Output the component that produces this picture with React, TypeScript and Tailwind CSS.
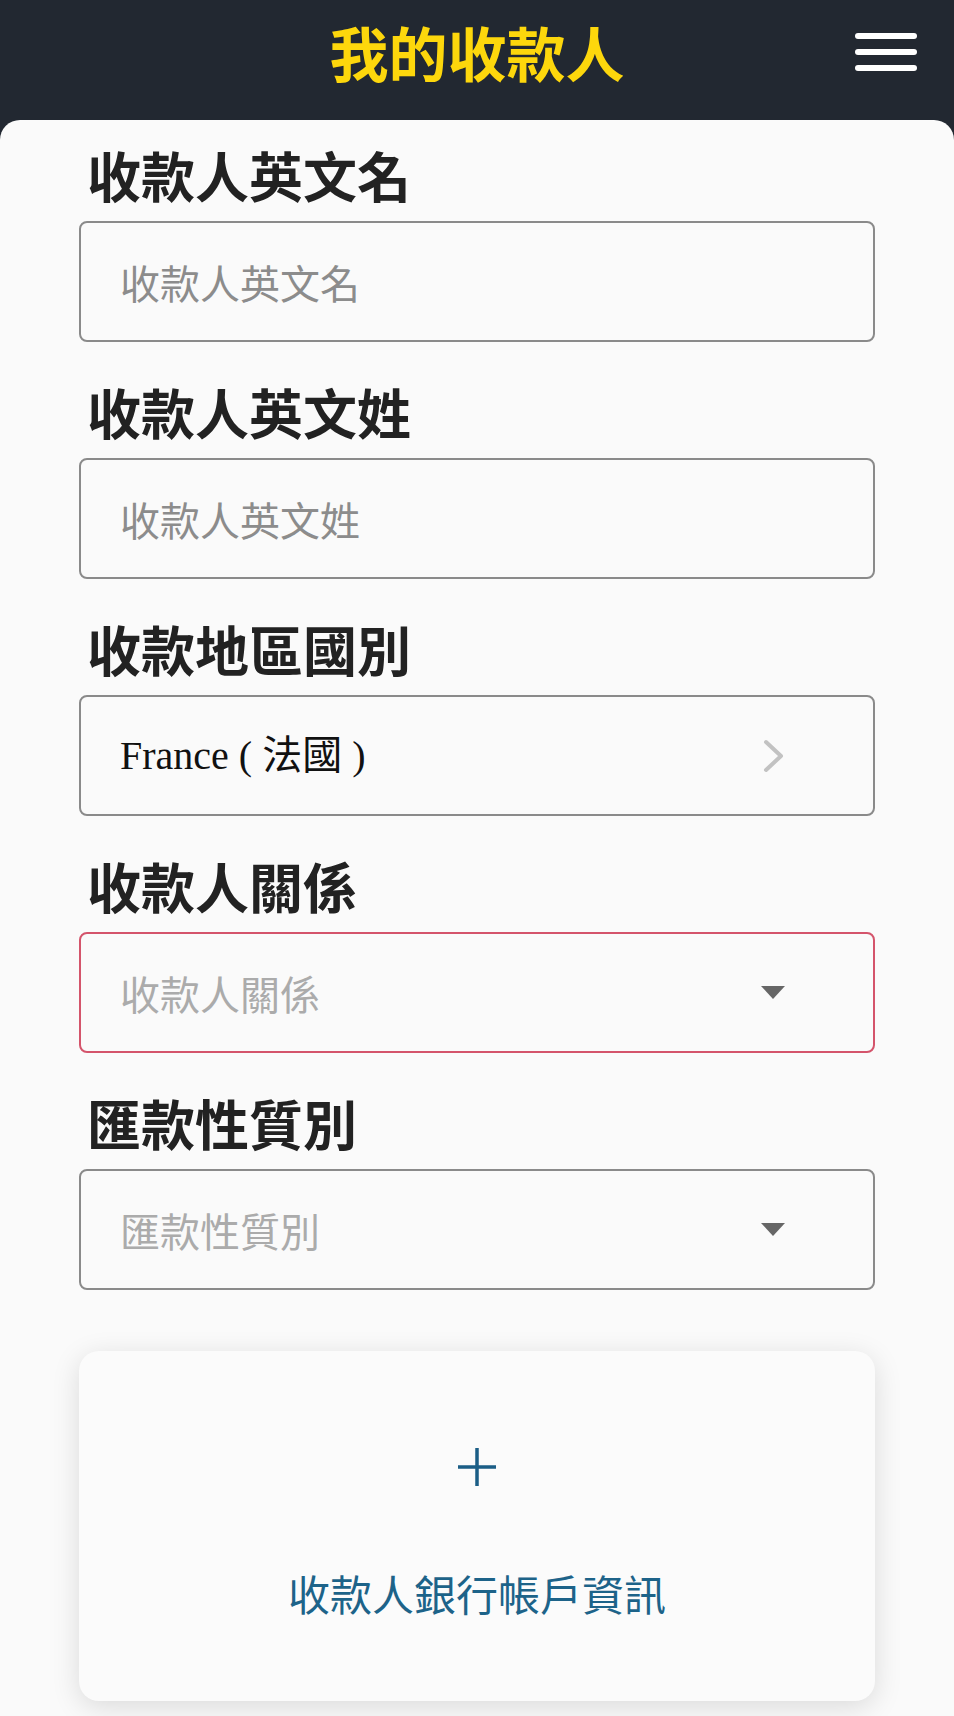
import React from 'react';

const cjk = '"Noto Sans CJK TC", "Noto Sans", sans-serif';

function Chevron() {
    return (
        <svg width="22" height="34" viewBox="0 0 22 34" fill="none">
            <path d="M3 3 L18 17 L3 31" stroke="#c2c2c2" strokeWidth="4" strokeLinecap="round" strokeLinejoin="round" />
        </svg>
    );
}

function Caret() {
    return (
        <svg width="24" height="13" viewBox="0 0 24 13">
            <polygon points="0,0 24,0 12,13" fill="#666666" />
        </svg>
    );
}

function Field({ label, children, invalid }: { label: string; children: React.ReactNode; invalid?: boolean }) {
    return (
        <div className="flex flex-col">
            <div className="pl-[8px] text-[54px] leading-[64px] font-bold text-[#222222] mb-[14px]">{label}</div>
            <div
                className={
                    invalid
                        ? 'flex h-[121px] items-center justify-between rounded-[8px] border-2 border-[#d4546b] bg-[#fafafa] pl-[39px] pr-[88px]'
                        : 'flex h-[121px] items-center justify-between rounded-[8px] border-2 border-[#8a8a8a] bg-[#fafafa] pl-[39px] pr-[88px]'
                }
            >
                {children}
            </div>
        </div>
    );
}

export default function App() {
    return (
        <div className="min-h-screen bg-[#222831]" style={{ fontFamily: cjk }}>
            <header className="grid h-[120px] grid-cols-[1fr_auto_1fr] items-center pb-[16px]">
                <div />
                <h1 className="text-[59px] font-bold leading-[70px] text-[#fdd70c]">我的收款人</h1>
                <div className="flex justify-end pr-[37px]">
                    <button className="flex flex-col gap-[10px]">
                        <span className="block h-[6px] w-[62px] rounded-full bg-white" />
                        <span className="block h-[6px] w-[62px] rounded-full bg-white" />
                        <span className="block h-[6px] w-[62px] rounded-full bg-white" />
                    </button>
                </div>
            </header>

            <main className="min-h-[calc(100vh-120px)] rounded-t-[20px] bg-[#fafafa] px-[79px] pt-[23px] pb-[15px]">
                <div className="flex flex-col gap-[38px]">
                    <Field label="收款人英文名">
                        <span className="text-[40px] text-[#8c8c8c]">收款人英文名</span>
                    </Field>
                    <Field label="收款人英文姓">
                        <span className="text-[40px] text-[#8c8c8c]">收款人英文姓</span>
                    </Field>
                    <Field label="收款地區國別">
                        <span
                            className="text-[40px] text-[#111111]"
                            style={{ fontFamily: '"Liberation Serif", "Noto Sans CJK TC", serif' }}
                        >
                            France ( 法國 )
                        </span>
                        <Chevron />
                    </Field>
                    <Field label="收款人關係" invalid>
                        <span className="text-[40px] text-[#ababab]">收款人關係</span>
                        <Caret />
                    </Field>
                    <Field label="匯款性質別">
                        <span className="text-[40px] text-[#ababab]">匯款性質別</span>
                        <Caret />
                    </Field>
                </div>

                <div className="mt-[61px] flex h-[350px] flex-col items-center rounded-[20px] bg-[#fbfbfb] pt-[96px] shadow-[0_6px_28px_rgba(0,0,0,0.13)]">
                    <svg width="40" height="40" viewBox="0 0 40 40">
                        <path d="M20 1 V39 M1 20 H39" stroke="#1b5e86" strokeWidth="3.5" />
                    </svg>
                    <div className="mt-[81px] text-[42px] leading-[50px] text-[#1d6389]">收款人銀行帳戶資訊</div>
                </div>
            </main>
        </div>
    );
}
